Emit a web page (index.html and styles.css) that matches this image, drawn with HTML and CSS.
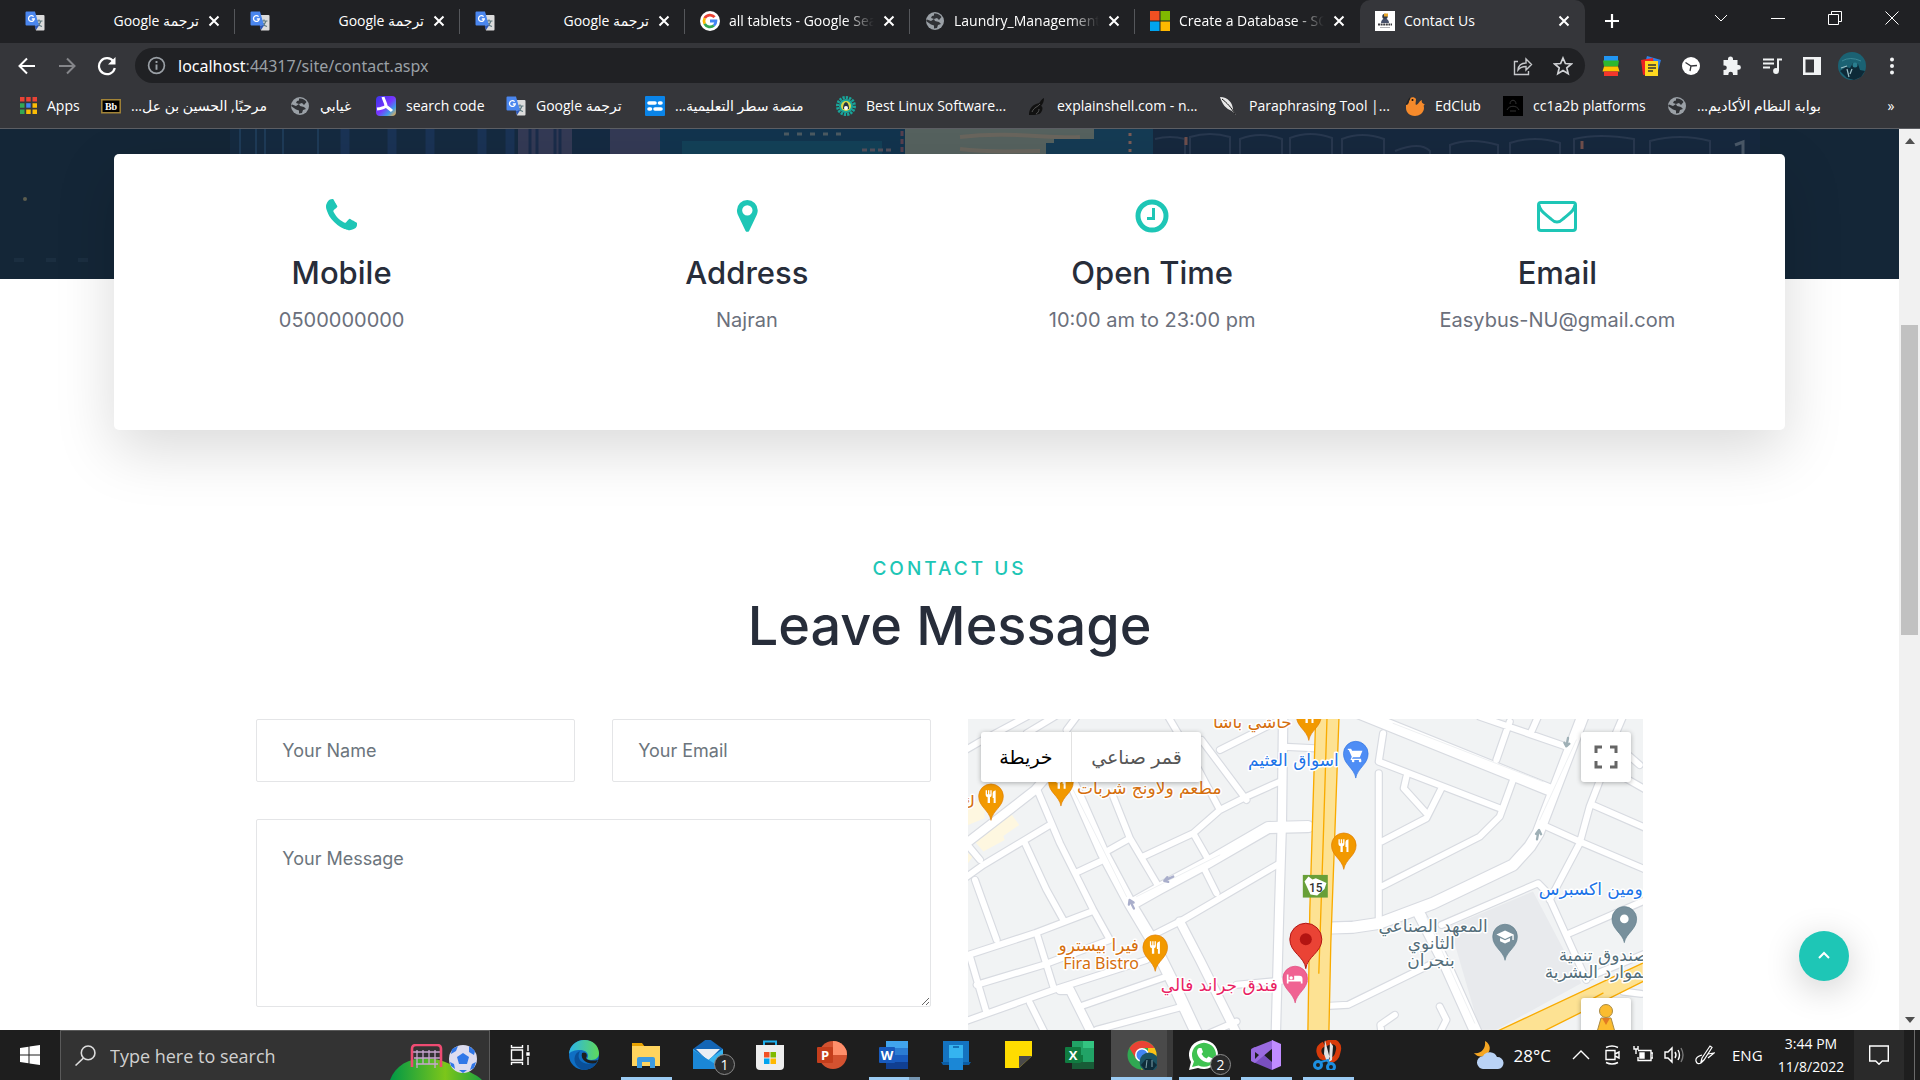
FILE: index.html
```html
<!DOCTYPE html>
<html lang="en">
<head>
<meta charset="utf-8">
<title>Contact Us</title>
<link rel="stylesheet" href="styles.css">
</head>
<body>
<svg class="defs" aria-hidden="true">
  <symbol id="translate" viewBox="0 0 20 20"><path fill="#dcdcdc" d="M8 4h10.500a1 1 0 0 1 1 1v13.500a1 1 0 0 1-1 1H11z"/><path d="M10.500 10h7M14 8.500V10M16 10c-.7 2.500-2.500 4.500-4.500 5.500M12.500 11.500c.8 2 2.500 3.500 4.500 4" fill="none" stroke="#5f7a80" stroke-width="1.200"/><path fill="#4a86ee" d="M1.500.5H10l4 14H1.500a1 1 0 0 1-1-1v-12a1 1 0 0 1 1-1z"/><path fill="#2b56b8" d="M9.500 14.500H14l-3 4.500z"/><path d="M8.600 5.600A2.900 2.900 0 1 0 9.300 8H6.800" fill="none" stroke="#fff" stroke-width="1.300"/></symbol>
  <symbol id="globe" viewBox="0 0 20 20"><circle cx="10" cy="10" r="9" fill="#9aa0a6"/><path fill="#303236" d="M9 2.500c3-.5 6 1 7.500 3.500L14 9l-2-2-3 1 1 2 4 1 2 2-3 1-1 3-3 .5v-3l-3-1-5-3.500 1-1.500 4 1.500L9 8 6 7l1-2 2-.5z"/></symbol>
  <symbol id="close" viewBox="0 0 12 12"><path d="M1.500 1.500l9 9M10.500 1.500l-9 9" stroke="#fff" stroke-width="2"/></symbol>
  <symbol id="g" viewBox="0 0 20 20"><circle cx="10" cy="10" r="10" fill="#fff"/><g fill="none" stroke-width="2.800"><path d="M14.600 6.200A6 6 0 0 0 4.700 7.200" stroke="#ea4335"/><path d="M4.700 7.200a6 6 0 0 0 0 5.600" stroke="#fbbc05"/><path d="M4.700 12.800a6 6 0 0 0 9.200 1.700" stroke="#34a853"/><path d="M13.900 14.500a6 6 0 0 0 2-4.500H10" stroke="#4285f4"/></g></symbol>
</svg>

<header class="browser">
  <div class="tabstrip">
    <div class="tab rtl"><svg class="fav"><use href="#translate"/></svg><span class="title" dir="rtl">ترجمة Google</span><button class="x" aria-label="Close tab"><svg><use href="#close"/></svg></button></div>
    <div class="tab rtl"><svg class="fav"><use href="#translate"/></svg><span class="title" dir="rtl">ترجمة Google</span><button class="x" aria-label="Close tab"><svg><use href="#close"/></svg></button></div>
    <div class="tab rtl"><svg class="fav"><use href="#translate"/></svg><span class="title" dir="rtl">ترجمة Google</span><button class="x" aria-label="Close tab"><svg><use href="#close"/></svg></button></div>
    <div class="tab"><svg class="fav"><use href="#g"/></svg><span class="title fade">all tablets - Google Search</span><button class="x" aria-label="Close tab"><svg><use href="#close"/></svg></button></div>
    <div class="tab"><svg class="fav"><use href="#globe"/></svg><span class="title fade">Laundry_Management_</span><button class="x" aria-label="Close tab"><svg><use href="#close"/></svg></button></div>
    <div class="tab last"><svg class="fav" viewBox="0 0 20 20"><path fill="#f25022" d="M0 0h9.500v9.500H0z"/><path fill="#7fba00" d="M10.500 0H20v9.500h-9.500z"/><path fill="#00a4ef" d="M0 10.500h9.500V20H0z"/><path fill="#ffb900" d="M10.500 10.500H20V20h-9.500z"/></svg><span class="title fade">Create a Database - SQL</span><button class="x" aria-label="Close tab"><svg><use href="#close"/></svg></button></div>
    <div class="tab active"><svg class="fav" viewBox="0 0 20 20"><path fill="#fff" d="M0 0h20v20H0z"/><circle cx="10" cy="5.500" r="2.700" fill="#333a48"/><path fill="#e8a72c" d="M9 2.500h4v3H9z"/><path fill="#46506a" d="M6 12c0-6 8-6 8 0z"/><path d="M3 13.500h14" stroke="#3c3c40" stroke-width="2" stroke-dasharray="2 .6"/><path d="M5 16.500h10" stroke="#b0b0b4"/></svg><span class="title">Contact Us</span><button class="x" aria-label="Close tab"><svg><use href="#close"/></svg></button></div>
    <button class="newtab" aria-label="New tab"><svg viewBox="0 0 16 16"><path d="M8 1v14M1 8h14" stroke="#fff" stroke-width="2.200"/></svg></button>
    <div class="wincontrols">
      <button aria-label="Search tabs"><svg viewBox="0 0 14 14"><path d="M1 4l6 6 6-6"/></svg></button>
      <button aria-label="Minimize"><svg viewBox="0 0 14 14"><path d="M0 7.500h14"/></svg></button>
      <button aria-label="Restore"><svg viewBox="0 0 14 14"><path d="M.5 3.500h10v10H.5zM3.500 3V.5h10v10H11"/></svg></button>
      <button aria-label="Close"><svg viewBox="0 0 14 14"><path d="M.5.5l13 13M13.500.5l-13 13"/></svg></button>
    </div>
  </div>

  <div class="toolbar">
    <div class="nav">
      <button aria-label="Back"><svg viewBox="0 0 20 20"><path d="M18 10H3M10 2.500L2.500 10l7.500 7.500" fill="none" stroke="#fff" stroke-width="2"/></svg></button>
      <button aria-label="Forward"><svg viewBox="0 0 20 20"><path d="M2 10h15M10 2.500l7.500 7.500-7.500 7.500" fill="none" stroke="#85868a" stroke-width="2"/></svg></button>
      <button aria-label="Reload"><svg viewBox="0 0 20 20"><path d="M16.500 5.500A8 8 0 1 0 17.800 12" fill="none" stroke="#fff" stroke-width="2.200"/><path d="M18.500 1v7.500H11z" fill="#fff"/></svg></button>
    </div>
    <div class="omnibox">
      <svg class="info" viewBox="0 0 18 18"><circle cx="9" cy="9" r="7.500" fill="none" stroke="#9aa0a6" stroke-width="1.600"/><path d="M9 8v5M9 4.800v1.800" stroke="#9aa0a6" stroke-width="1.800"/></svg>
      <div class="url"><b>localhost</b>:44317/site/contact.aspx</div>
      <button aria-label="Share"><svg viewBox="0 0 20 20"><path d="M5 5.500H1.500v13h14V15M5 14c.5-5 3-7 8-7V3l5.500 5.500L13 14v-3.500c-4 0-6 1-8 3.500z" fill="none" stroke="#c6c8cb" stroke-width="1.400"/></svg></button>
      <button aria-label="Bookmark"><svg viewBox="0 0 20 20"><path d="M10 2l2.400 5.500 5.900.5-4.500 3.900 1.400 5.800L10 14.600l-5.200 3.100 1.400-5.800L1.700 8l5.900-.5z" fill="none" stroke="#d0d2d5" stroke-width="1.700"/></svg></button>
    </div>
    <div class="ext">
      <button aria-label="Stack"><svg viewBox="0 0 20 20"><path fill="#2196f3" d="M3 0h14v5H3z"/><path fill="#2eb82e" d="M2 4.500h16l-1 6H3z"/><path fill="#ffc400" d="M3 10.500h14l1.500 5h-17z"/><path fill="#f4362c" d="M3 15.500h14V20H3z"/></svg></button>
      <button aria-label="Notes"><svg viewBox="0 0 20 20"><path fill="#2f7fe8" d="M6 0l14 4-4 14L2 14z"/><path fill="#e22" d="M0 4l12-2 2 15-12 2z"/><path fill="#ffd81f" d="M4 5h13v15H4z"/><path d="M7 9h8M7 12h8M7 15h5" stroke="#333" stroke-width="1.400"/></svg></button>
      <button aria-label="Clock"><svg viewBox="0 0 20 20"><circle cx="10" cy="10" r="9" fill="#fff"/><path d="M4.500 6.500L10 10l6-.5M10 10l-1 5" fill="none" stroke="#35363a" stroke-width="1.300"/></svg></button>
      <button aria-label="Extensions"><svg viewBox="0 0 20 20"><path fill="#f1f3f4" d="M7 3a2.500 2.500 0 0 1 5 0v1h4.500v5h1a2.300 2.300 0 0 1 0 4.800h-1V19H12v-1a2.300 2.300 0 0 0-4.600 0v1H2.500v-5h1a2.300 2.300 0 0 0 0-4.600h-1V4H7z"/></svg></button>
      <button aria-label="Media"><svg viewBox="0 0 20 20"><path d="M1 3.500h11M1 7.500h11M1 11.500h7" stroke="#f1f3f4" stroke-width="2"/><path d="M20 3.500h-4V15" fill="none" stroke="#f1f3f4" stroke-width="2"/><circle cx="14" cy="15" r="2.900" fill="#f1f3f4"/></svg></button>
      <button aria-label="Side panel"><svg viewBox="0 0 20 20"><path fill="#f1f3f4" d="M1 1h18v18H1z"/><path fill="#35363a" d="M3.500 3.500h8.500v13H3.500z"/></svg></button>
      <button class="avatar" aria-label="Profile"><svg viewBox="0 0 28 28"><circle cx="14" cy="14" r="14" fill="#1b6273"/><path fill="#0d2a38" d="M2 19l6-4 4 1 3-5 5 1 2 6 5 1-4 6-7 3-7-2z"/><path d="M9 17l2 8M14 17l-2 5M3 16l6-2" stroke="#9cc0c8" stroke-width="1.200"/><circle cx="17" cy="13" r="2.500" fill="#2a7f90"/><path d="M4 9q8-5 19 0" stroke="#3b8795" fill="none"/></svg></button>
      <button aria-label="Menu"><svg viewBox="0 0 20 20" fill="#f1f3f4"><circle cx="10" cy="3.500" r="2"/><circle cx="10" cy="10" r="2"/><circle cx="10" cy="16.500" r="2"/></svg></button>
    </div>
  </div>

  <nav class="bookmarks">
    <a href="#"><svg class="apps" viewBox="0 0 17 17"><path fill="#ea4335" d="M0 0h4.500v4.500H0zM6.200 0h4.500v4.500H6.200zM12.500 0H17v4.500h-4.500z"/><path fill="#34a853" d="M0 6.200h4.500v4.500H0zM0 12.500h4.500V17H0z"/><path fill="#4285f4" d="M6.200 6.200h4.500v4.500H6.200z"/><path fill="#fbbc05" d="M12.500 6.200H17v4.500h-4.500zM6.200 12.500h4.500V17H6.200zM12.500 12.500H17V17h-4.500z"/></svg><span>Apps</span></a>
    <a href="#"><svg viewBox="0 0 20 20"><path fill="#000" stroke="#a38437" stroke-width="1.500" d="M.8 3.800h18.400v13H.8z"/><text x="10" y="14" class="bb">Bb</text></svg><span dir="rtl">مرحبًا, الحسين بن عل...</span></a>
    <a href="#"><svg><use href="#globe"/></svg><span dir="rtl">غيابي</span></a>
    <a href="#"><svg viewBox="0 0 20 20"><defs><linearGradient id="sc" x1="0" y1="0" x2="1" y2="1"><stop offset="0" stop-color="#3a35e8"/><stop offset=".5" stop-color="#7a35ff"/><stop offset=".75" stop-color="#3f9be8"/><stop offset="1" stop-color="#ffb03a"/></linearGradient></defs><rect width="20" height="20" rx="4" fill="url(#sc)"/><path d="M7 1c1 4 3 6 3 9M1 13c5-.5 7-1 9-3 2 2 4 3 6 5" fill="none" stroke="#fff" stroke-width="3"/></svg><span>search code</span></a>
    <a href="#"><svg><use href="#translate"/></svg><span dir="rtl">ترجمة Google</span></a>
    <a href="#"><svg viewBox="0 0 20 20"><rect width="20" height="20" rx="1" fill="#0a84e8"/><path d="M4 7h6M14.500 7h1.500M4 13h1.500M10 13h6" stroke="#fff" stroke-width="3.600" stroke-linecap="round"/></svg><span dir="rtl">منصة سطر التعليمية...</span></a>
    <a href="#"><svg viewBox="0 0 20 20"><circle cx="10" cy="10" r="8.500" fill="none" stroke="#18a69b" stroke-width="3" stroke-dasharray="2.200 1.100"/><circle cx="10" cy="10" r="7" fill="#1aa69b"/><circle cx="10" cy="10" r="5" fill="#d8d74a"/><path fill="#234" d="M7 13c0-9 6-9 6 0z"/><circle cx="10" cy="12" r="2" fill="#fff"/></svg><span>Best Linux Software...</span></a>
    <a href="#"><svg viewBox="0 0 20 20"><path d="M2 19c0-5 2-8 5-10s5-1 6-3 2-3 4-4c0 3-1 6-3 8 3 1 1 7-2 8s-6 1-10 1z" fill="#111"/><path d="M5 16c2-5 6-5 8-8M9 18c2-1 3-3 3-5" stroke="#555" fill="none"/></svg><span>explainshell.com - n...</span></a>
    <a href="#"><svg viewBox="0 0 20 20"><path d="M1 1c8 0 13 6 13 13l3 5-4-4C7 13 3 8 1 1z" fill="#e8e8e8"/><path d="M3 3c5 4 9 8 13 15" stroke="#111" fill="none"/></svg><span>Paraphrasing Tool |...</span></a>
    <a href="#"><svg viewBox="0 0 20 20"><path d="M1 9c2 0 3-2 3-4 0-4 5-5 7-2 0 3-1 5 0 6 3-1 3-4 6-5-1 3 1 3 3 5-2 0-1 1-1 3 0 5-5 8-9 8-6 0-9-4-9-8z" fill="#f58a2b"/><path d="M1 8c2 0 2-4 4-6" stroke="#222" stroke-width="1.500" fill="none"/><circle cx="7.500" cy="4" r="1" fill="#111"/></svg><span>EdClub</span></a>
    <a href="#"><svg viewBox="0 0 20 20"><path fill="#000" d="M0 0h20v20H0z"/><path d="M7 8c0-5 6-5 6 0M4 14c2-5 10-5 12 0M7 15h6" stroke="#333" fill="none"/></svg><span>cc1a2b platforms</span></a>
    <a href="#"><svg><use href="#globe"/></svg><span dir="rtl">بوابة النظام الأكاديم...</span></a>
    <button class="more" aria-label="More bookmarks">»</button>
  </nav>
</header>

<div class="viewport">
  <main class="page">
    <section class="hero">
      <svg viewBox="0 0 1899 150" preserveAspectRatio="none" aria-hidden="true">
        <path fill="#142637" d="M0 0h1899v150H0z"/>
        <path fill="#152a40" d="M230 0h300v40H230z"/>
        <path d="M240 0v30M256 0v30M265 0v30M283 0v30M318 0v30" stroke="#1e3b58" stroke-width="2"/>
        <path d="M345 0v30M392 0v30M430 0v30M482 0v30M510 0v30" stroke="#1a3355" stroke-width="9"/>
        <path d="M518 0h54v30h-54zM610 0h50v30h-50z" fill="#343a55"/>
        <path d="M530 0v30M537 0v30M555 0v30M560 0v30" stroke="#1a2c4a" stroke-width="3"/>
        <path d="M572 0h38v30h-38z" fill="#152a42"/>
        <path d="M660 0h245v30H660z" fill="#12344e"/>
        <path d="M682 12h200v14H682z" fill="#134158"/>
        <path d="M784 5h60" stroke="#4b5a62" stroke-width="3" stroke-dasharray="5 8"/>
        <path d="M862 21h30" stroke="#54505c" stroke-width="3" stroke-dasharray="5 3"/>
        <path d="M902 2v26" stroke="#57404e" stroke-width="3" stroke-dasharray="5 3"/>
        <path d="M905 0h190v30H905z" fill="#56625f"/>
        <path d="M960 8c50-6 90 2 120 0M960 20c30 4 60 2 80 2" stroke="#6a665e" stroke-width="4" fill="none"/>
        <path d="M1046 14h8v-4h40V0h60v30h-108z" fill="#153b54"/>
        <path d="M1130 4v22" stroke="#7b5c56" stroke-width="3" stroke-dasharray="3 5"/>
        <path d="M1153 0h607v30h-607z" fill="#16283e"/>
        <path d="M1155 10q15-4 30 0v18M1190 28V8q20-6 40 0v20M1240 28V10q20-8 42 0v18M1290 28V9q20-8 42 0v19M1342 28V10q20-8 42 0v18M1395 22q25-10 35 0v8M1450 28V16q20-8 48 0v14M1510 28V14q25-8 50 0v16M1574 28V10q25-6 60 0v20M1650 28V12q30-8 60 0v18" fill="none" stroke="#28384f" stroke-width="2"/>
        <path d="M1186 8v8M1582 12v8" stroke="#704f4c" stroke-width="3"/>
        <path d="M1735 16l8-3v12" stroke="#4a5868" stroke-width="3" fill="none"/>
        <circle cx="25" cy="70" r="2" fill="#5c5d4e"/><path d="M14 131h80" stroke="#1b2e40" stroke-width="4" stroke-dasharray="10 22"/>
      </svg>
    </section>

    <section class="cards">
      <div class="info-card">
        <svg viewBox="0 0 1408 1534" class="i-phone"><path d="M1408 1112q0 27-10 70.500t-21 68.500q-21 50-122 106-94 51-186 51-27 0-53-3.500t-57.500-12.500-47-14.500-55.500-20.500-49-18q-98-35-175-83-127-79-264-216T152 776q-48-77-83-175-3-9-18-49t-20.500-55.500T16 449.500 3.500 392 0 339q0-92 51-186Q107 52 157 31q25-11 68.500-21T296 0q14 0 21 3 18 6 53 76 11 19 30 54t35 63.500 31 53.500q3 4 17.500 25t21.500 35.500 7 28.500q0 20-28.500 50t-62 55-62 53-28.500 46q0 9 5 22.500t8.500 20.500 14 24 11.500 19q76 137 174 235t235 174q2 1 19 11.500t24 14 20.500 8.500 22.500 5q18 0 46-28.500t53-62 55-62 50-28.500q14 0 28.500 7t35.500 21.500 25 17.500q25 15 53.500 31t63.500 35 54 30q70 35 76 53 3 7 3 21z"/></svg>
        <h3>Mobile</h3><p>0500000000</p>
      </div>
      <div class="info-card">
        <svg viewBox="0 0 24 36"><path fill-rule="evenodd" d="M12 1a11 11 0 0 1 11 11c0 2-.4 3.500-1.200 5.200L14 33.500c-.8 1.700-3.200 1.700-4 0L2.200 17.200C1.400 15.500 1 14 1 12A11 11 0 0 1 12 1zm0 5.500a5.500 5.500 0 1 0 0 11 5.500 5.500 0 0 0 0-11z"/></svg>
        <h3>Address</h3><p>Najran</p>
      </div>
      <div class="info-card">
        <svg viewBox="0 0 34 34"><circle cx="17" cy="17" r="14" fill="none" stroke="#1ec6b6" stroke-width="5"/><path d="M18.500 9v10.500H12" fill="none" stroke="#1ec6b6" stroke-width="3"/></svg>
        <h3>Open Time</h3><p>10:00 am to 23:00 pm</p>
      </div>
      <div class="info-card">
        <svg viewBox="0 0 40 34"><rect x="1.500" y="3.500" width="37" height="28" rx="2.500" fill="none" stroke="#1ec6b6" stroke-width="3"/><path d="M2 6c1 6 5 8 12 14 4 4 8 4 12 0 7-6 11-8 12-14" fill="none" stroke="#1ec6b6" stroke-width="3"/></svg>
        <h3>Email</h3><p>Easybus-NU@gmail.com</p>
      </div>
    </section>

    <section class="contact">
      <p class="eyebrow">CONTACT US</p>
      <h2>Leave Message</h2>
      <div class="columns">
        <form class="form">
          <input type="text" aria-label="Your Name" placeholder="Your Name">
          <input type="email" aria-label="Your Email" placeholder="Your Email">
          <textarea aria-label="Your Message" placeholder="Your Message"></textarea>
        </form>
        <div class="map">
          <svg class="mapart" viewBox="0 0 675 311" preserveAspectRatio="xMinYMin slice">
            <path fill="#f1f3f4" d="M0 0h675v311H0z"/>
            <g transform="translate(-8 -9) scale(.33333)" stroke-linejoin="round" stroke-linecap="round">
              <path fill="#e8eaed" d="M1470 650L1720 545 1865 820 1610 960H1560z"/>
              <path fill="#fef7e0" d="M32 380L145 300 178 345 130 378 134 390 70 425zM24 275h50v50l-50 20zM24 430l14 10-14 20z"/>
              <defs>
                <g id="thin" fill="none">
                  <path d="M0 515L70 465 270 345M45 510L110 690M195 400L260 540 310 630M230 235L300 400 345 490 400 600 450 690M10 740L225 670 395 605M345 490L430 450M430 430L510 385M460 260L510 385 590 520M0 130L60 95 200 20M200 70L300 10M320 60L350 20M725 90L860 270M625 20L690 130 780 300M550 440L700 370 780 300 860 260 960 215M780 120L960 30M700 370L740 440M730 470L770 550M580 675L660 635 960 460M50 825L250 765 450 690M230 670L280 830M30 740L80 910M0 940L280 840 560 750M210 880L255 970M360 890L620 800M410 960L670 890M750 970L830 935M830 825L1040 805M970 110L1065 115M10 390L60 450"/>
                  <path d="M1270 70L1257 155 1620 295M1257 190V630M1660 210L1620 320 1560 380 1265 530M1340 200L1332 235 1400 310M1445 235L1400 325 1265 395M1650 35L1610 150M1560 20L1820 110M1735 20L1715 65M1750 345L1860 395 2060 480M1990 20L1960 90M1925 200L1890 290 1860 400 1770 570M1900 285L2060 355M2000 130L2040 165M1980 195L2060 240M1445 645L1735 520 1760 545 1880 810M1830 670L2060 570M1890 800L2060 730M1110 888L1165 885 1430 755M1265 970L1262 945 1305 915M1440 890L1460 930 1440 970M1975 810L1990 845 2045 852"/>
                </g>
                <g id="mid" fill="none">
                  <path d="M0 415L225 240 260 200M660 635L720 750 830 970M300 840L330 840 395 970M970 20L966 340 958 600 948 970"/>
                </g>
                <g id="wide" fill="none">
                  <path d="M320 180L430 430 510 580 570 680 640 820 715 980M520 580L600 535 740 460 925 353 1045 350M1200 10L1770 240M1873 10L1735 370 1710 410 1660 465 1420 580 1260 640 1180 652 1115 654M1375 605L1460 770 1550 970"/>
                </g>
              </defs>
              <g stroke="#d8dbe1"><use href="#thin" stroke-width="25"/><use href="#mid" stroke-width="32"/><use href="#wide" stroke-width="40"/></g>
              <g stroke="#fff"><use href="#thin" stroke-width="18"/><use href="#mid" stroke-width="25"/><use href="#wide" stroke-width="33"/></g>
              <path d="M340 240L500 560M530 560L780 435M1300 40L1750 215M1850 90L1740 330M1400 620L1545 940" fill="none" stroke="#e6e8ec" stroke-width="2"/>
              <path fill="#fde293" stroke="#f9ab00" stroke-width="4" d="M1068 10H1138L1124 400 1113 700 1107 980H1044L1050 600zM1600 970L2060 755V810L1740 970z"/>
              <path fill="none" stroke="#f9ab00" stroke-width="4" d="M1102 10L1090 400 1082 640 1077 790M1870 882L1930 850"/>
              <path d="M640 500l-26 12m8-10l-9 11 12 3M522 596l-12-24m-3 12l2-14 12 8" stroke="#a9aecb" stroke-width="7" fill="none"/>
              <path d="M1825 84l-4 22m-7-8l6 11 9-8M1732 388l5-26m-8 10l9-12 6 13" stroke="#9fb0b6" stroke-width="7" fill="none"/>
              <g fill="#f29900" stroke="#e07b00" stroke-width="2">
                <g id="rest"><path d="M93 330C87 300 56 290 56 259A37 37 0 0 1 130 259C130 290 99 300 93 330z"/><path stroke="none" fill="#fff" d="M77 241h4v12h3v-12h4v12h3v-12h4v14q0 6-5 7v17h-7v-17q-6-1-6-7zM101 279v-15h-3v-15q0-6 9-8v38z"/></g>
                <use href="#rest" x="210" y="-43"/><use href="#rest" x="954" y="-240"/><use href="#rest" x="493" y="453"/><use href="#rest" x="1059" y="147"/>
              </g>
              <g transform="translate(1188 131)"><path fill="#4e8df5" stroke="#2f73e0" stroke-width="2" d="M0 72C-6 42-37 32-37 0A37 37 0 0 1 37 0C37 32 6 42 0 72z"/><path fill="#fff" d="M-24-15h10l3 6h31l-8 20H-8l-4 4h28v4h-32l4-10-9-20h-3z"/><circle cx="-8" cy="22" r="4" fill="#fff"/><circle cx="13" cy="22" r="4" fill="#fff"/></g>
              <g transform="translate(1006 806)"><path fill="#f06292" stroke="#e0457a" stroke-width="2" d="M0 72C-6 42-37 32-37 0A37 37 0 0 1 37 0C37 32 6 42 0 72z"/><path fill="#fff" d="M-25-12h5V4H-3V-8h16q9 0 9 9v14h-5V9h-37v6h-5z"/><circle cx="-12" cy="-2" r="5" fill="#fff"/></g>
              <g transform="translate(1636 680)"><path fill="#78909c" stroke="#607d8b" stroke-width="2" d="M0 70C-6 42-37 32-37 0A37 37 0 0 1 37 0C37 32 6 42 0 70z"/><path fill="#fff" d="M-26-6L0-18 26-6V10h-4V-3L0 7zM-15 4L0 11 15 4v10L0 21l-15-7z"/></g>
              <g transform="translate(1994 627)"><path fill="#78909c" stroke="#607d8b" stroke-width="2" d="M0 70C-6 42-37 32-37 0A37 37 0 0 1 37 0C37 32 6 42 0 70z"/><circle r="13" fill="#fff"/></g>
              <path fill="#689f38" d="M1029 495h75v68h-75z"/><path fill="#fff" d="M1034 515l12-15 12 9 10-4 14 6 18 8-6 18-22 20-20-3z"/>
              <path fill="#ea4335" stroke="#b31412" stroke-width="3" d="M1038 775C1034 740 990 728 990 688A48 48 0 0 1 1086 688C1086 728 1042 740 1038 775z"/><circle cx="1038" cy="688" r="18" fill="#b31412"/>
            </g>
            <text class="shield" x="348" y="173" text-anchor="middle">15</text>
            <g class="labels">
              <g fill="#d56e0c"><text x="324" y="9" text-anchor="end">حاشي باشا</text><text x="109" y="75">مطعم ولاونج شربات</text><text x="-7" y="89">ك</text><text x="171" y="232" text-anchor="end">فيرا بيسترو</text><text class="latin" x="171" y="250" text-anchor="end">Fira Bistro</text></g>
              <g fill="#1a73e8"><text x="371" y="47" text-anchor="end">اسواق العثيم</text><text x="571" y="176">ومين اكسبرس</text></g>
              <text fill="#e91e63" x="310" y="272" text-anchor="end">فندق جراند فالي</text>
              <g fill="#546e7a"><text x="520" y="213" text-anchor="end">المعهد الصناعي</text><text x="487" y="230" text-anchor="end">الثانوي</text><text x="487" y="247" text-anchor="end">بنجران</text><text x="591" y="242">صندوق تنمية</text><text x="577" y="259">الموارد البشرية</text></g>
            </g>
          </svg>
          <div class="maptype"><button class="on">خريطة</button><button>قمر صناعي</button></div>
          <button class="mapbtn full" aria-label="Fullscreen"><svg viewBox="0 0 24 24"><path d="M8 2H2v6M16 2h6v6M8 22H2v-6M16 22h6v-6" fill="none" stroke="#666" stroke-width="3"/></svg></button>
          <button class="mapbtn peg" aria-label="Street View"><svg viewBox="0 0 24 40"><path fill="#fbbc2f" stroke="#a98a45" d="M7 14h10l4 14-3 2-1-3v12H7V27l-1 3-3-2z"/><path fill="#e27a22" d="M8 14h8l-4 7z"/><circle cx="12" cy="7" r="6.500" fill="#fbbc2f" stroke="#a98a45"/></svg></button>
        </div>
      </div>
    </section>
    <a class="totop" href="#" aria-label="Back to top"><svg viewBox="0 0 14 14"><path d="M2 9l5-5 5 5" fill="none" stroke="#fff" stroke-width="2"/></svg></a>
  </main>
  <div class="scrollbar" aria-hidden="true"><i class="up"></i><i class="thumb"></i><i class="down"></i></div>
</div>

<footer class="taskbar">
  <button class="start" aria-label="Start"><svg viewBox="0 0 20 20" fill="#fff"><path d="M0 3l8.500-1.300v7.800H0zM9.500 1.500L20 0v9.500H9.500zM0 10.500h8.500v7.800L0 17zM9.500 10.500H20V20L9.500 18.500z"/></svg></button>
  <label class="search"><svg class="mag" viewBox="0 0 20 20"><circle cx="12.500" cy="7.500" r="6.500" fill="none" stroke="#ddd" stroke-width="1.500"/><path d="M8 12.500L.5 19.500" stroke="#ddd" stroke-width="1.500"/></svg><input type="text" placeholder="Type here to search" aria-label="Type here to search">
    <svg class="scene" viewBox="0 0 96 36"><defs><linearGradient id="hill"><stop offset="0" stop-color="#009846"/><stop offset=".6" stop-color="#7cc61a"/><stop offset="1" stop-color="#1fa33e"/></linearGradient></defs><path fill="url(#hill)" d="M0 36C8 14 36 8 60 20 76 26 86 30 92 36z"/><path d="M27 6v18M33 6v14M39 6v14M45 6v18M23 8h28M24 14h26M26 20h22" stroke="#c9a6cf" stroke-width="1.300"/><path d="M22 23V5q0-4 4-4h21q4 0 4 4v18" fill="none" stroke="#ee4b72" stroke-width="2.600"/><circle cx="73" cy="15" r="14" fill="#dcdcf0"/><path fill="#3077e8" d="M73 9l6 4-2 7h-8l-2-7zM62 5l6-3-2 5-5 3zM79 2l6 5-1 4-5-3zM60 18l4 2 1 5-4-3zM82 20l4-2-2 6-4 2zM69 26h8l-4 3z"/></svg></label>
  <button class="taskview" aria-label="Task view"><svg viewBox="0 0 20 20" fill="none" stroke="#fff" stroke-width="1.400"><path d="M1 5h11v10H1zM1 0v2.500h11V0M1 20v-2.500h11V20M17.500 0v6M17.500 12v8"/><path d="M16.500 8h2v2h-2z" fill="#fff"/></svg></button>
  <div class="pinned">
    <button aria-label="Edge"><svg viewBox="0 0 30 30"><defs><linearGradient id="e1" x2="1"><stop offset="0" stop-color="#2bb3ea"/><stop offset="1" stop-color="#5fd95a"/></linearGradient></defs><circle cx="15" cy="15" r="15" fill="#0f6fc4"/><path fill="url(#e1)" d="M0 14C1-4 29-5 30 13c0 7-7 8-12 6 3-5-1-9-7-9-5 0-9 1-11 4z"/><path fill="#0a4f98" d="M11 11c-5 9 4 16 17 11-3 6-9 8-14 8-6-2-10-8-8-14 1-3 3-4 5-5z"/><path fill="#1e1e1e" d="M13 13c4-2 6 2 4 5 1 3 8 3 12 2l-2 3c-8 2-16-3-14-10z"/></svg></button>
    <button class="run" aria-label="File Explorer"><svg viewBox="0 0 30 30"><path fill="#e8a200" d="M1 3h10l3 4H1z"/><path fill="#ffd45e" d="M1 6h28v20H1z"/><path fill="#3d9be0" d="M6 28v-9q0-2 2-2h14q2 0 2 2v9h-5v-6h-8v6z"/></svg></button>
    <button aria-label="Mail"><svg viewBox="0 0 30 30"><path fill="#1465b5" d="M0 9L15-2l15 11v9H0z"/><path fill="#e9eef4" d="M3 9h24L15 21z"/><path fill="#35b4f0" d="M0 9l15 11L30 9v20H0z"/><path fill="#1b87d6" d="M0 10v19h30z"/></svg><span class="badge">1</span></button>
    <button aria-label="Store"><svg viewBox="0 0 30 30"><path d="M9 6V1.500h12V6" fill="none" stroke="#1db0ee" stroke-width="2"/><path fill="#eee" d="M1 5h28v21q0 4-4 4H5q-4 0-4-4z"/><path fill="#f25022" d="M9 12h5.500v5.500H9z"/><path fill="#7fba00" d="M15.500 12H21v5.500h-5.500z"/><path fill="#00a4ef" d="M9 18.500h5.500V24H9z"/><path fill="#ffb900" d="M15.500 18.500H21V24h-5.500z"/></svg></button>
    <button aria-label="PowerPoint"><svg viewBox="0 0 30 30"><circle cx="16" cy="15" r="14" fill="#d35230"/><path fill="#ff8f6b" d="M16 1a14 14 0 0 1 14 14H16z"/><rect y="7" width="16" height="16" rx="1" fill="#c43e1c"/><text class="app" x="8" y="20">P</text></svg></button>
    <button class="run group" aria-label="Word"><svg viewBox="0 0 30 30"><path fill="#41a5ee" d="M7 1h22v7H7z"/><path fill="#2b7cd3" d="M7 8h22v7H7z"/><path fill="#185abd" d="M7 15h22v7H7z"/><path fill="#103f91" d="M7 22h22v7H7z"/><rect y="7" width="16" height="16" rx="1" fill="#185abd"/><text class="app" x="8" y="20">W</text></svg></button>
    <button aria-label="Phone"><svg viewBox="0 0 30 30"><path fill="#1473c0" d="M2 1h26v21H2z"/><path fill="#0b5da5" d="M0 22h30l-2 3H2z"/><path fill="#35b4f0" d="M8 5h14v25H8z"/><path fill="#1b87d6" d="M8 18h14v12H8z"/><path d="M12 7h6" stroke="#0b5da5" stroke-width="1.500"/></svg></button>
    <button aria-label="Sticky Notes"><svg viewBox="0 0 30 30"><path fill="#ffdc00" d="M2 1h27v15L16 28H2z"/><path fill="#4a4a4a" d="M16 28V16h13z"/></svg></button>
    <button aria-label="Excel"><svg viewBox="0 0 30 30"><path fill="#21a366" d="M7 1h22v28H7z"/><path fill="#33c481" d="M18 1h11v7H18z"/><path fill="#107c41" d="M7 15h11v7H7z"/><path fill="#185c37" d="M7 22h22v7H7z"/><rect y="7" width="16" height="16" rx="1" fill="#107c41"/><text class="app" x="8" y="20">X</text></svg></button>
    <button class="run current" aria-label="Chrome"><svg viewBox="0 0 30 30"><circle cx="15" cy="15" r="14.500" fill="#30a852"/><path fill="#ea4335" d="M2.500 8A14.500 14.500 0 0 1 27.600 8H15l-6 11z"/><path fill="#fbc116" d="M27.600 8A14.500 14.500 0 0 1 14 29.500L21 19V8z"/><circle cx="15" cy="15" r="7" fill="#fff"/><circle cx="15" cy="15" r="5.500" fill="#4285f4"/><circle cx="22" cy="22" r="9.500" fill="#1b5363"/><path fill="#0e2c3a" d="M14 25l5-6 5 0 6 6-5 6h-6z"/><path d="M19 28l1-8M25 20v7" stroke="#7fa3ac" fill="none"/></svg></button>
    <button class="run" aria-label="WhatsApp"><svg viewBox="0 0 30 30"><path fill="#fff" d="M0 30l2-8A14.500 14.500 0 1 1 9 28z"/><path fill="#3fc351" d="M3 27l2-5.500A12 12 0 1 1 9.500 25.500z"/><path fill="#fff" d="M10 8h2.500l1.500 4-1.500 2q2 3.500 5 4.500l2-2 4 2q0 4-4.500 4C13 22 7.500 16 8 11q.5-2.500 2-3z"/></svg><span class="badge">2</span></button>
    <button class="run" aria-label="Visual Studio"><svg viewBox="0 0 30 30"><path fill="#7a4fc0" d="M0 9l4-2 17 15V30L2 22 0 20z"/><path fill="#9a6be0" d="M0 21l4 2L22 8V0L2 8 0 10z"/><path fill="#c08cff" d="M21 0l9 4v22l-9 4z"/><path fill="#1e1e1e" d="M4 12l4 3-4 4zM21 10v11l-7-5.500z"/></svg></button>
    <button class="run" aria-label="Snip"><svg viewBox="0 0 30 30"><path fill="none" stroke="#d83b0a" stroke-width="5" d="M12 4C24-2 27 6 25 12c-1 6-4 8-8 9M11 4q-6 3-5 8 1 6 7 6"/><path fill="#e4e4e4" d="M12 0l5 19-3 3-3-8zM17 2l-1 20 3-2 1-14z"/><circle cx="5" cy="25" r="3.500" fill="none" stroke="#1d8fe0" stroke-width="3"/><circle cx="18" cy="27" r="3.500" fill="none" stroke="#1d8fe0" stroke-width="3"/><path d="M8 22l7-2 1 4" stroke="#1d8fe0" stroke-width="2" fill="none"/></svg></button>
  </div>
  <div class="tray">
    <span class="weather"><svg viewBox="0 0 30 28"><path fill="#f5a623" d="M11 0c6 3 6 10 2 13s-9 4-13-1c7 1 12-4 11-12z"/><path fill="#b9d2f5" d="M10 28a6.500 6.500 0 0 1-1-13 8 8 0 0 1 14 1 6 6 0 0 1 1 12z"/></svg>28°C</span>
    <svg class="t" viewBox="0 0 20 20"><path d="M2 14l8-8 8 8"/></svg>
    <svg class="t" viewBox="0 0 20 20"><path d="M4 5.500h9v9H4zM13 9l4-2v6l-4-2zM4 2.500q6-3 12 0M4 17.500q6 3 12 0"/></svg>
    <svg class="t" viewBox="0 0 20 20"><path d="M5 5.500h13v10H5V12M18 8h2v5h-2M1 1v3h4V1M3 4v5"/><path d="M7 8h4v5H7z" fill="#fff"/></svg>
    <svg class="t" viewBox="0 0 20 20"><path d="M1 7h3l4-4v14l-4-4H1zM11 7q2 3 0 6M14 5q3 5 0 10"/><path d="M17 3q4 7 0 14" opacity=".4"/></svg>
    <svg class="t" viewBox="0 0 20 20"><path d="M7 13L15 1l2 1.500L9 15l-3 2zM13 9l6-1-6 5M7 10q-7 2-6 6t5 2l3-3" stroke-width="1.200"/></svg>
    <span class="lang">ENG</span>
    <span class="clock">3:44 PM<br>11/8/2022</span>
    <button class="note" aria-label="Notifications"><svg viewBox="0 0 20 20"><path d="M.7 1h18.600v15h-6L10 19.300 6.700 16h-6z" fill="none" stroke="#fff" stroke-width="1.400"/></svg></button>
    <i class="peek"></i>
  </div>
</footer>
</body>
</html>
```
FILE: styles.css
```css
* { box-sizing: border-box; }
html, body { margin: 0; height: 100%; }
body {
  display: flex;
  flex-direction: column;
  overflow: hidden;
  font-family: "Open Sans", "DejaVu Sans", sans-serif;
  font-size: 14px;
  background: #fff;
}
button { border: 0; padding: 0; background: none; font: inherit; color: inherit; }
svg { display: block; }
.defs { display: none; }

/* browser frame */
.browser { flex: none; background: #35363a; color: #fff; border-bottom: 1px solid #5c5e63; }
.tabstrip { display: flex; height: 43px; padding-left: 10px; background: #202124; }
.tab {
  display: flex;
  align-items: center;
  gap: 9px;
  width: 225px;
  padding: 0 15px 2px 15px;
  position: relative;
}
.tab::after { content: ""; position: absolute; right: 0; top: 9px; width: 1px; height: 25px; background: #55575b; }
.tab.last::after, .tab.active::after { display: none; }
.tab.active { background: #35363a; border-radius: 10px 10px 0 0; }
.fav { flex: none; width: 20px; height: 20px; }
.title { flex: 1; overflow: hidden; white-space: nowrap; }
.fade { mask-image: linear-gradient(90deg, #000 80%, transparent 100%); }
.x { flex: none; width: 12px; height: 12px; }
.x svg { width: 12px; height: 12px; }
.newtab { width: 54px; padding-bottom: 2px; display: grid; place-items: center; }
.newtab svg { width: 16px; height: 16px; }
.wincontrols { display: flex; margin-left: auto; height: 36px; }
.wincontrols button { width: 57px; display: grid; place-items: center; }
.wincontrols svg { width: 14px; height: 14px; fill: none; stroke: #fff; stroke-width: 1; }

.toolbar { display: flex; align-items: center; height: 45px; }
.nav { display: flex; padding-left: 7px; width: 135px; }
.nav button { width: 40px; display: grid; place-items: center; }
.nav svg { width: 20px; height: 20px; }
.omnibox {
  flex: 1;
  display: flex;
  align-items: center;
  gap: 12px;
  height: 35px;
  padding: 0 8px 0 12px;
  border-radius: 18px;
  background: #202124;
}
.info { width: 19px; height: 19px; }
.url { flex: 1; font-size: 16px; color: #9aa0a6; font-family: "Noto Sans", sans-serif; }
.url b { font-weight: 400; color: #fff; }
.omnibox button { width: 28px; display: grid; place-items: center; }
.omnibox button svg { width: 20px; height: 20px; }
.ext { display: flex; width: 335px; padding: 0 8px 0 6px; }
.ext button { flex: 1; display: grid; place-items: center; }
.ext svg { width: 20px; height: 20px; }
.ext .avatar svg { width: 28px; height: 28px; }

.bookmarks {
  display: grid;
  grid-template-columns: 81px 189px 86px 130px 139px 191px 191px 192px 186px 98px 164px 1fr 58px;
  align-items: center;
  height: 40px;
  padding-left: 20px;
  padding-bottom: 5px;
}
.bookmarks a { display: flex; align-items: center; gap: 10px; color: #fff; text-decoration: none; white-space: nowrap; }
.bookmarks svg { flex: none; width: 20px; height: 20px; }
.bookmarks .apps { width: 17px; height: 17px; }
.bb { font: bold 10px "Liberation Serif", serif; fill: #fff; text-anchor: middle; }

/* scrolled page area */
.viewport { flex: 1; min-height: 0; display: flex; position: relative; }
.page {
  flex: 1;
  min-width: 0;
  overflow: hidden;
  font-family: Inter, sans-serif;
  color: #272d3a;
}
.scrollbar { width: 21px; background: #f1f1f1; display: flex; flex-direction: column; align-items: center; padding: 9px 0 7px; }
.scrollbar .up { border: 5px solid transparent; border-top: 0; border-bottom: 6px solid #505050; }
.scrollbar .down { border: 5px solid transparent; border-bottom: 0; border-top: 6px solid #505050; margin-top: auto; }
.scrollbar .thumb { width: 17px; height: 35%; margin-top: 181px; background: #c1c1c1; }
.hero { height: 150px; }
.hero svg { width: 100%; height: 100%; }
.cards {
  position: relative;
  display: grid;
  grid-template-columns: repeat(4, 1fr);
  margin: -125px 114px 0;
  padding: 45px 25px 94px;
  background: #fff;
  border-radius: 5px;
  box-shadow: 0 20px 60px rgba(0, 0, 0, .15);
}
.info-card { text-align: center; }
.info-card svg { height: 34px; margin: 0 auto; fill: #1ec6b6; }
.info-card h3 { margin: 20px 0 11px; font-size: 31px; line-height: 40px; font-weight: 500; }
.info-card p { margin: 0; font-size: 20px; line-height: 32px; color: #6b707c; }
.contact { width: 73%; margin: 121px auto 0; }
.eyebrow { margin: 0; text-align: center; font-size: 19px; line-height: 36px; font-weight: 500; letter-spacing: 3px; color: #1ec6b6; }
h2 { margin: 6px 0 61px; text-align: center; font-size: 54px; line-height: 65px; font-weight: 500; }
.columns { display: grid; grid-template-columns: 1fr 1fr; gap: 37px; }
.form { display: grid; grid-template-columns: 1fr 1fr; gap: 37px; align-content: start; }
.form input, .form textarea {
  width: 100%;
  border: 1px solid #e4e5e7;
  border-radius: 2px;
  padding: 0 25px;
  font: 18px Inter, sans-serif;
  color: #272d3a;
}
.form input { height: 63px; }
.form textarea { grid-column: 1 / 3; height: 188px; padding-top: 28px; display: block; }
.form ::placeholder { color: #6c757d; opacity: 1; }

.map { position: relative; height: 430px; overflow: hidden; background: #f1f3f4; }
.mapart { width: 100%; height: auto; }
.labels { font: 17px "DejaVu Sans", sans-serif; paint-order: stroke; stroke: #fff; stroke-width: 3px; stroke-linejoin: round; }
.labels .latin { font: 16px "Noto Sans", sans-serif; }
.shield { font: 500 12px Roboto, sans-serif; fill: #333; }
.maptype { position: absolute; left: 13px; top: 13px; display: flex; background: #fff; border-radius: 3px; box-shadow: 0 1px 5px rgba(0, 0, 0, .3); }
.maptype button { width: 129px; height: 50px; font: 19px "Liberation Sans", "DejaVu Sans", sans-serif; color: #565656; }
.maptype .on { width: 91px; color: #000; border-right: 1px solid #e2e2e2; }
.mapbtn { position: absolute; right: 12px; width: 50px; height: 50px; display: grid; justify-items: center; align-items: center; background: #fff; border-radius: 3px; box-shadow: 0 1px 5px rgba(0, 0, 0, .3); }
.full { top: 13px; }
.full svg { width: 24px; height: 24px; }
.mapbtn.peg { top: 279px; height: 120px; align-items: start; padding-top: 6px; }
.peg svg { width: 24px; height: 40px; }
.totop {
  position: absolute;
  right: 71px;
  bottom: 49px;
  width: 50px;
  height: 50px;
  display: grid;
  place-items: center;
  border-radius: 50%;
  background: #1ec6b6;
  box-shadow: 0 8px 36px rgba(0, 0, 0, .2);
}
.totop svg { width: 14px; height: 14px; }

/* desktop taskbar */
.taskbar { flex: none; display: flex; height: 50px; background: #1e1e1e; color: #fff; }
.taskbar button { display: grid; place-items: center; }
.start { width: 60px; }
.start svg { width: 20px; height: 20px; }
.search { display: flex; align-items: center; gap: 12px; width: 430px; padding: 0 3px 0 14px; background: #333; border: 1px solid #5a5a5a; border-bottom: 0; }
.search .mag { flex: none; width: 21px; height: 21px; }
.search input { flex: 1; min-width: 0; border: 0; outline: 0; background: none; color: #ddd; font: 18px "Open Sans", sans-serif; }
.search input::placeholder { color: #d0d0d0; opacity: 1; }
.scene { flex: none; align-self: flex-end; width: 96px; height: 36px; }
.taskview { width: 63px; padding-right: 2px; }
.taskview svg { width: 21px; height: 20px; }
.pinned { display: flex; }
.pinned button { position: relative; width: 62px; }
.pinned svg { width: 30px; height: 30px; }
.run::after { content: ""; position: absolute; left: 6px; right: 5px; bottom: 0; height: 3px; background: #9bcbf3; }
.run.group::after { background: linear-gradient(90deg, #9bcbf3 40px, #7595b0 40px); }
.pinned .current { background: linear-gradient(90deg, #4a4a4a 56px, #3a3a3a 56px); }
.run.current::after { left: 0; right: 1px; }
.badge { position: absolute; left: 37px; top: 24px; width: 21px; height: 21px; border: 1px solid #8c8c8c; border-radius: 50%; background: #2a2a2a; font-size: 14px; line-height: 19px; text-align: center; }
.app { font: bold 13px "Open Sans", sans-serif; fill: #fff; text-anchor: middle; }
.tray { display: flex; align-items: center; margin-left: auto; padding-right: 5px; }
.weather { display: flex; align-items: center; gap: 10px; margin-right: 20px; font-size: 17px; }
.weather svg { width: 30px; height: 28px; }
.t { width: 20px; height: 20px; margin-right: 11px; fill: none; stroke: #fff; stroke-width: 1.400; }
.lang { width: 42px; padding-left: 6px; font-size: 15px; }
.clock { width: 86px; font-size: 14px; line-height: 23px; text-align: center; }
.note { width: 50px; height: 50px; background: #2a2a2a; }
.note svg { width: 20px; height: 20px; }
.peek { width: 1px; height: 50px; margin-left: 10px; background: #6a6a6a; }
```
